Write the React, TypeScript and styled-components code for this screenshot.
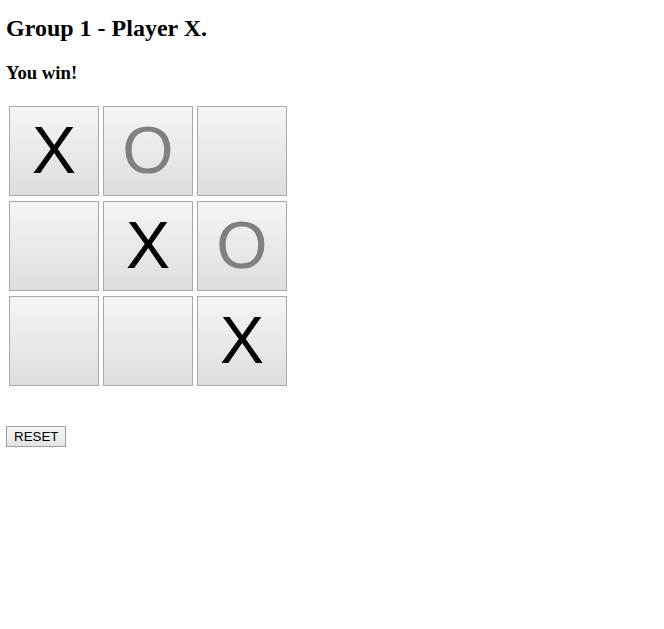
import React from "react";
import styled, { createGlobalStyle } from "styled-components";

const Global = createGlobalStyle`
  html, body { margin: 0; padding: 0; background: #fff; }
  body { font-family: "Liberation Serif", "Times New Roman", serif; color: #000; }
`;

const Page = styled.div`
  padding: 0 6px;
  display: flex;
  flex-direction: column;
  align-items: flex-start;
`;

const Title = styled.h2`
  font-family: "Liberation Serif", serif;
  font-size: 24px;
  font-weight: bold;
  line-height: 28px;
  margin: 14px 0 0 0;
`;

const Status = styled.h3`
  font-family: "Liberation Serif", serif;
  font-size: 18.72px;
  font-weight: bold;
  line-height: 22px;
  margin: 20px 0 0 0;
`;

const Board = styled.div`
  display: grid;
  grid-template-columns: repeat(3, 90px);
  grid-auto-rows: 90px;
  column-gap: 4px;
  row-gap: 5px;
  margin: 22px 0 0 3px;
`;

const Cell = styled.button<{ $mark: string }>`
  box-sizing: border-box;
  width: 90px;
  height: 90px;
  padding: 0 0 3px 0;
  margin: 0;
  border: 1px solid #a9a9a9;
  border-radius: 0;
  background: linear-gradient(to bottom, #f5f5f5 0%, #dddddd 100%);
  font-family: "Liberation Sans", Arial, sans-serif;
  font-size: 66px;
  line-height: 1;
  color: ${(p) => (p.$mark === "O" ? "#808080" : "#000")};
  display: flex;
  align-items: center;
  justify-content: center;
  cursor: pointer;
`;

const Reset = styled.button`
  box-sizing: border-box;
  margin: 40px 0 0 0;
  height: 21px;
  padding: 0 7px;
  border: 1px solid #a0a0a0;
  border-radius: 0;
  background: linear-gradient(to bottom, #f6f6f6, #e3e3e3);
  font-family: "Liberation Sans", Arial, sans-serif;
  font-size: 13.33px;
  color: #000;
  cursor: pointer;
`;

const board = ["X", "O", "", "", "X", "O", "", "", "X"];

export default function App() {
  return (
    <>
      <Global />
      <Page>
        <Title>Group 1 - Player X.</Title>
        <Status>You win!</Status>
        <Board>
          {board.map((m, i) => (
            <Cell key={i} $mark={m}>
              {m}
            </Cell>
          ))}
        </Board>
        <Reset>RESET</Reset>
      </Page>
    </>
  );
}
